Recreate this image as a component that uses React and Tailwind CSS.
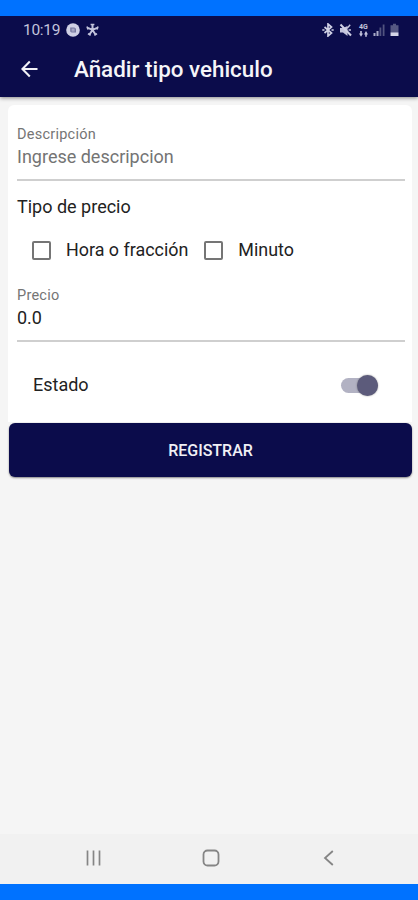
import React, { useState } from 'react';

const StatusBar = () => (
  <div className="flex h-7 items-center justify-between pl-[23px] pr-[19px] text-[#c3c4dc]">
    <div className="flex items-center">
      <span className="w-[43px] whitespace-nowrap text-[15.5px] leading-7 tracking-[-0.3px]">10:19</span>
      {/* Chat notification */}
      <svg width="14" height="14" viewBox="0 0 14 14">
        <circle cx="7" cy="7" r="6.8" fill="#cfd0e4" />
        <path d="M4.2 4.6h4.2l1.6 1.2v3.8H5.6L4.2 8.4z" fill="#77799f" />
        <path d="M5.6 6.2h3M5.6 7.9h3" stroke="#cfd0e4" strokeWidth="0.8" />
      </svg>
      {/* Fan shaped notification */}
      <svg className="ml-[6px]" width="13" height="14" viewBox="0 0 13 14" fill="none" stroke="#c3c4dc">
        <path d="M6.5 6.5V1.8M6.5 6.8L1.8 4.8M6.5 6.8l4.7-2M6.5 7l-3.2 4.7M6.5 7l3.2 4.7" strokeWidth="2" />
        <path d="M4.6 1.5h3.8M1 3.6l1 2.8M12 3.6l-1 2.8M2 10.6l2.6 1.8M11 10.6l-2.6 1.8" strokeWidth="1.6" />
      </svg>
    </div>
    <div className="flex items-center">
      {/* Bluetooth */}
      <svg width="12" height="14" viewBox="0 0 12 14" fill="none" stroke="#d0d1e5" strokeWidth="1.7">
        <path d="M2.5 4l7 6-3.5 3V1l3.5 3-7 6" />
        <path d="M0.3 7h2.2M9.5 7h2.2" />
      </svg>
      {/* Muted speaker */}
      <svg className="ml-[5px]" width="13" height="14" viewBox="0 0 13 14">
        <path d="M1 5h3L8.5 3v10L4 9.5H1z" fill="#c3c4dc" />
        <path d="M1.5 1.5l10.5 11" stroke="#d0d1e5" strokeWidth="2" />
        <path d="M8.2 5.2l3-3.4M9.6 7h2.4" stroke="#c3c4dc" strokeWidth="1.4" />
      </svg>
      {/* Network type with data arrows */}
      <div className="ml-[6px] flex w-[11px] flex-col items-center text-[7px] font-bold leading-[7px]">
        <span>4G</span>
        <svg width="9" height="6" viewBox="0 0 9 6" fill="#c3c4dc">
          <path d="M1.2 0h1.6v2.4H4L2 5.8 0 2.4h1.2zM6.2 5.8h1.6V3.4H9L7 0 5 3.4h1.2z" />
        </svg>
      </div>
      {/* Signal strength */}
      <svg className="ml-[4px]" width="12" height="14" viewBox="0 0 12 14">
        <path d="M0.5 10h2v3h-2zM3.5 8h2v5h-2z" fill="#a9aac7" />
        <path d="M6.5 4.5h1.8V13H6.5zM9.7 1.5h1.8V13H9.7z" fill="#51537f" />
      </svg>
      {/* Battery */}
      <svg className="ml-[5px]" width="9" height="14" viewBox="0 0 9 14">
        <path d="M3 0.8h3v1.4h2.5V9H0.5V2.2H3z" fill="#565882" />
        <path d="M0.5 9.3h8V13h-8z" fill="#d6d7e8" />
      </svg>
    </div>
  </div>
);

const Header = () => (
  <header className="flex h-[50px] items-center pl-[21px]">
    <button type="button" aria-label="Volver">
      <svg width="17" height="18" viewBox="0 0 17 18" fill="none" stroke="#f1f1f6" strokeWidth="2.1">
        <path d="M16.5 9H1.6M8.8 1.4L1.4 9l7.4 7.6" />
      </svg>
    </button>
    <h1 className="ml-[36px] whitespace-nowrap text-[22.4px] font-medium leading-[26px] text-[#f5f5f8]">
      Añadir tipo vehiculo
    </h1>
  </header>
);

const PriceOption = ({ label, checked, onChange }) => (
  <label className="flex items-center">
    <input type="checkbox" className="sr-only" checked={checked} onChange={onChange} />
    <span className={`h-[19px] w-[19px] rounded-[2px] border-2 border-[#757575] ${checked ? 'bg-[#757575]' : 'bg-white'}`} />
    <span className="ml-[15px] whitespace-nowrap text-[17.9px] leading-6 text-[#222222]">{label}</span>
  </label>
);

const App = () => {
  const [descripcion, setDescripcion] = useState('');
  const [precio, setPrecio] = useState('0.0');
  const [tipoPrecio, setTipoPrecio] = useState(null);
  const [estado, setEstado] = useState(true);

  return (
    <div className="flex h-[900px] w-[418px] flex-col overflow-hidden border-y-[16px] border-[#0072ff] bg-[#f5f5f5] font-['Roboto',sans-serif]">
      <div className="z-10 h-[81px] shrink-0 bg-[#0b0c4b] shadow-[0_1px_4px_rgba(0,0,0,0.45)]">
        <StatusBar />
        <Header />
      </div>

      <main className="flex-1 pl-2 pr-[6px] pt-2">
        <form onSubmit={(e) => e.preventDefault()}>
          <div className="h-[317px] rounded-t-[6px] bg-white pl-[9px] pr-[7px] pt-5">
            {/* Description */}
            <div className="h-[56px] border-b-2 border-[#cfcfcf]">
              <label htmlFor="descripcion" className="block text-[14.5px] leading-[19px] tracking-[0.25px] text-[#757575]">Descripción</label>
              <input
                id="descripcion"
                className="block h-[26px] w-full text-[18px] leading-[26px] text-[#222222] outline-none placeholder:text-[#747474]"
                placeholder="Ingrese descripcion"
                value={descripcion}
                onChange={(e) => setDescripcion(e.target.value)}
              />
            </div>

            {/* Price type */}
            <p className="mt-[14px] text-[18px] leading-6 text-[#222222]">Tipo de precio</p>
            <div className="ml-[15px] mt-[19px] flex gap-[16px]">
              <PriceOption label="Hora o fracción" checked={tipoPrecio === 'hora'} onChange={() => setTipoPrecio('hora')} />
              <PriceOption label="Minuto" checked={tipoPrecio === 'minuto'} onChange={() => setTipoPrecio('minuto')} />
            </div>

            {/* Price */}
            <div className="mt-[24px] h-[56px] border-b-2 border-[#cfcfcf]">
              <label htmlFor="precio" className="block text-[14.5px] leading-[19px] tracking-[0.25px] text-[#757575]">Precio</label>
              <input
                id="precio"
                className="block h-[26px] w-full text-[18px] leading-[26px] text-[#222222] outline-none"
                value={precio}
                onChange={(e) => setPrecio(e.target.value)}
              />
            </div>

            {/* Status */}
            <div className="mt-[31px] flex items-center justify-between pl-4 pr-[27px]">
              <span className="text-[18px] leading-6 text-[#222222]">Estado</span>
              <button
                type="button"
                role="switch"
                aria-checked={estado}
                aria-label="Estado"
                onClick={() => setEstado(!estado)}
                className={`flex h-[15px] w-[37px] items-center rounded-full bg-[#b2b2c3] ${estado ? 'justify-end' : 'justify-start'}`}
              >
                <span className="h-[21px] w-[21px] shrink-0 rounded-full bg-[#5c5b7b] shadow-[0_0_2px_rgba(0,0,0,0.4)]" />
              </button>
            </div>
          </div>

          <button
            type="submit"
            className="ml-px mt-px block h-[54px] w-[403px] rounded-[6px] bg-[#0b0c4b] pt-px text-[16px] font-medium leading-6 text-[#f0f0f5] shadow-[0_1px_2px_rgba(0,0,0,0.45)]"
          >
            REGISTRAR
          </button>
        </form>
      </main>

      {/* Android navigation */}
      <nav className="flex h-[50px] shrink-0 items-center bg-[#f1f1f1] pb-[3px] pl-[85px]">
        <svg width="17" height="18" viewBox="0 0 17 18" stroke="#858585" strokeWidth="1.7">
          <path d="M2.5 1.5v15M8.5 1.5v15M14.5 1.5v15" />
        </svg>
        <svg className="ml-[100px]" width="18" height="18" viewBox="0 0 18 18" fill="none" stroke="#858585" strokeWidth="1.8">
          <rect x="1.5" y="1.5" width="15" height="15" rx="4" />
        </svg>
        <svg className="ml-[103px]" width="11" height="18" viewBox="0 0 11 18" fill="none" stroke="#858585" strokeWidth="1.8">
          <path d="M9.8 2L2 9l7.8 7" />
        </svg>
      </nav>
    </div>
  );
};

export default App;
